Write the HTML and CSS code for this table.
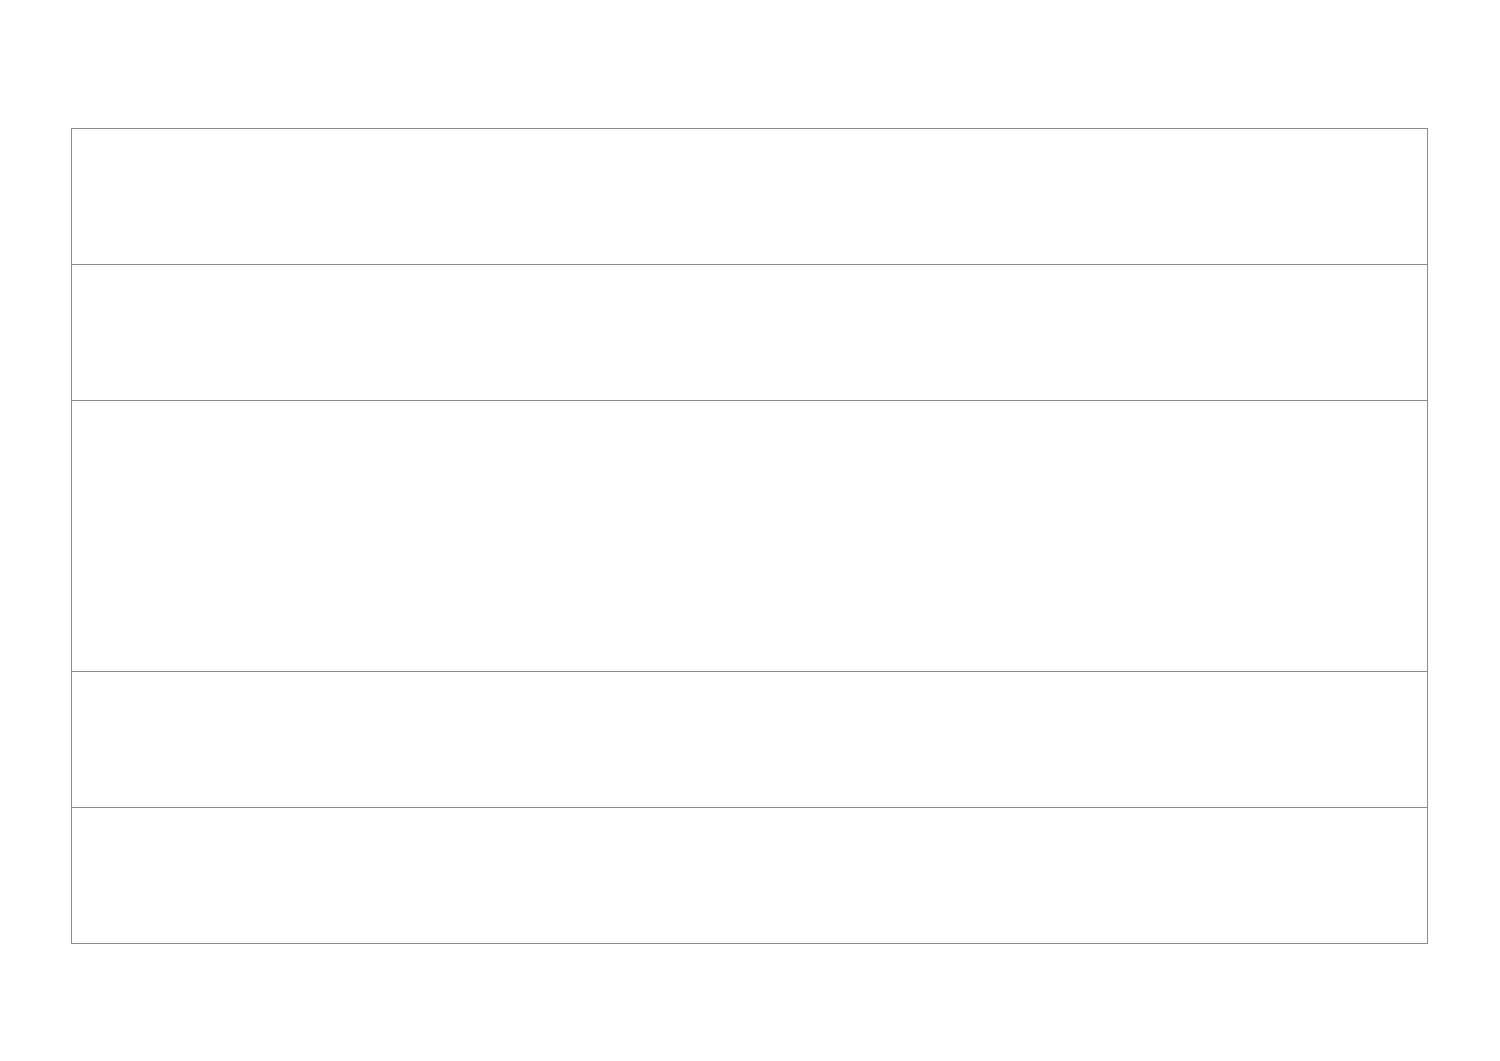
FILE: index.html
```html
<!DOCTYPE html>
<html lang="en">
<head>
<meta charset="utf-8">
<title>Sheet</title>
<link rel="stylesheet" href="styles.css">
</head>
<body>
<main class="sheet">
  <div class="grid">
    <div class="row"></div>
    <div class="row"></div>
    <div class="row row-tall"></div>
    <div class="row"></div>
    <div class="row"></div>
  </div>
</main>
</body>
</html>
```

FILE: styles.css
```css
html, body {
  margin: 0;
  padding: 0;
  background: #ffffff;
  font-family: "Liberation Sans", Arial, sans-serif;
}

.sheet {
  width: 1500px;
  height: 1061px;
  box-sizing: border-box;
  padding: 128px 0 0 71px;
}

.grid {
  width: 1357px;
  box-sizing: border-box;
  border: 1px solid #8c8c8c;
  display: flex;
  flex-direction: column;
}

.row {
  height: 136px;
  box-sizing: border-box;
  border-bottom: 1px solid #8c8c8c;
}

.row:last-child {
  height: 135px;
  border-bottom: none;
}

.row-tall {
  height: 271px;
}
```
